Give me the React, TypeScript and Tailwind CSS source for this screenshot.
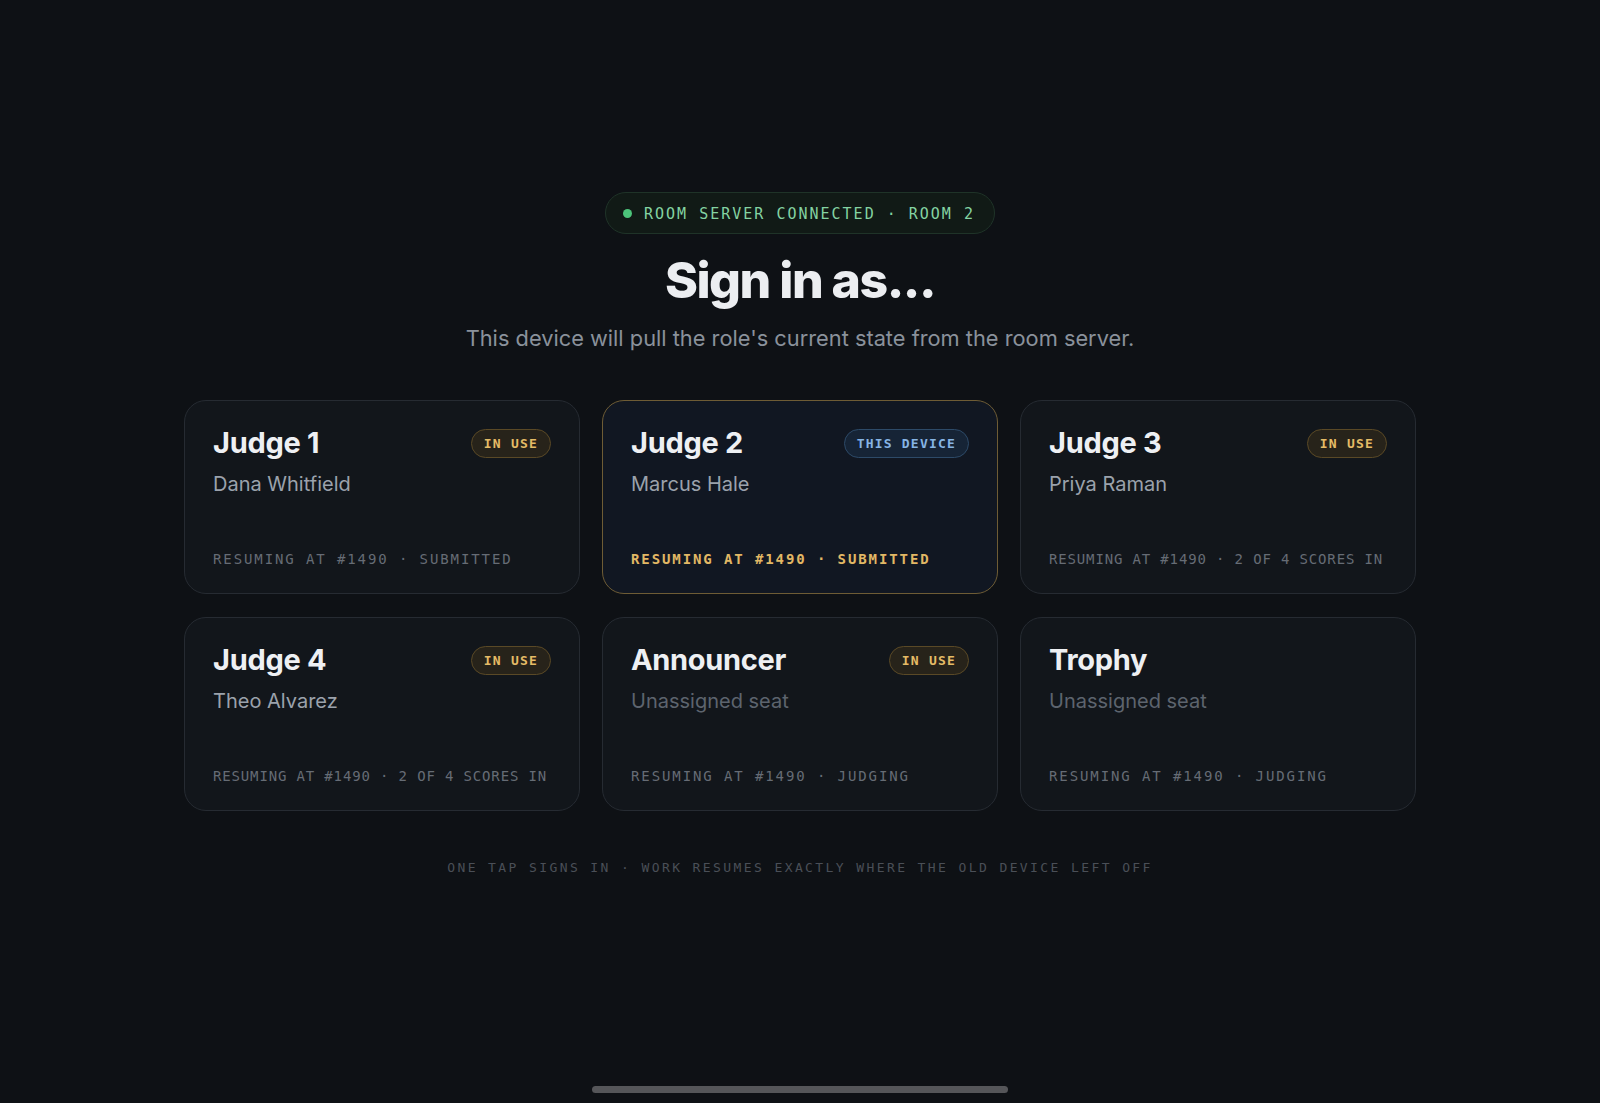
import React from "react";

type Card = {
  title: string;
  name: string;
  assigned: boolean;
  status: string;
  badge?: "inuse" | "device";
  active?: boolean;
  tight?: boolean;
};

const cards: Card[] = [
  { title: "Judge 1", name: "Dana Whitfield", assigned: true, status: "RESUMING AT #1490 · SUBMITTED", badge: "inuse" },
  { title: "Judge 2", name: "Marcus Hale", assigned: true, status: "RESUMING AT #1490 · SUBMITTED", badge: "device", active: true },
  { title: "Judge 3", name: "Priya Raman", assigned: true, status: "RESUMING AT #1490 · 2 OF 4 SCORES IN", badge: "inuse", tight: true },
  { title: "Judge 4", name: "Theo Alvarez", assigned: true, status: "RESUMING AT #1490 · 2 OF 4 SCORES IN", badge: "inuse", tight: true },
  { title: "Announcer", name: "Unassigned seat", assigned: false, status: "RESUMING AT #1490 · JUDGING", badge: "inuse" },
  { title: "Trophy", name: "Unassigned seat", assigned: false, status: "RESUMING AT #1490 · JUDGING" },
];

const mono = { fontFamily: '"DejaVu Sans Mono", "Liberation Mono", monospace' };

function Badge({ kind }: { kind: "inuse" | "device" }) {
  if (kind === "device") {
    return (
      <span
        className="flex h-[29px] items-center rounded-full border border-[#2d4a68] bg-[#162436] px-[12px] text-[13px] font-bold tracking-[1.2px] text-[#86b4e4]"
        style={mono}
      >
        THIS DEVICE
      </span>
    );
  }
  return (
    <span
      className="flex h-[29px] items-center rounded-full border border-[#5a4926] bg-[#27231a] px-[12px] text-[13px] font-bold tracking-[1.2px] text-[#e4bb66]"
      style={mono}
    >
      IN USE
    </span>
  );
}

function RoleCard({ c }: { c: Card }) {
  return (
    <div
      className={
        "flex h-[194px] flex-col rounded-[22px] border px-[28px] pt-[25px] pb-[24px] " +
        (c.active
          ? "border-[#6e5c35] bg-[#111722]"
          : "border-[#262b32] bg-[#12161b]")
      }
    >
      <div className="flex items-start justify-between">
        <div className="text-[29px] leading-[34px] font-bold tracking-[-0.3px] text-[#eef0f3]">{c.title}</div>
        <div className="mt-[3px]">{c.badge && <Badge kind={c.badge} />}</div>
      </div>
      <div
        className={
          "mt-[10px] text-[20px] leading-[28px] " +
          (c.assigned ? "text-[#9ba2ac]" : "text-[#5d646e]")
        }
      >
        {c.name}
      </div>
      <div
        className={
          "mt-auto whitespace-nowrap text-[14px] leading-[20px] " +
          (c.tight ? "tracking-[0.85px] " : "tracking-[1.9px] ") +
          (c.active ? "font-bold text-[#e2b865]" : "text-[#666c75]")
        }
        style={mono}
      >
        {c.status}
      </div>
    </div>
  );
}

export default function App() {
  return (
    <div
      className="relative flex min-h-[1103px] w-full flex-col items-center bg-[#0e1115] pt-[192px]"
      style={{ fontFamily: 'Inter, "Noto Sans", sans-serif' }}
    >
      <div className="flex h-[42px] items-center gap-[12px] rounded-full border border-[#1f3328] bg-[#111a16] pl-[17px] pr-[19px]">
        <span className="h-[9px] w-[9px] rounded-full bg-[#4cc47a]" />
        <span className="pt-[2px] text-[15px] tracking-[2px] text-[#84d3a2]" style={mono}>
          ROOM SERVER CONNECTED · ROOM 2
        </span>
      </div>
      <h1 className="mt-[20px] text-[50px] leading-[52px] font-extrabold tracking-[-1.5px] text-[#eceef1]">
        Sign in as...
      </h1>
      <p className="mt-[17px] text-[21.8px] leading-[30px] text-[#8a919b]">
        This device will pull the role's current state from the room server.
      </p>
      <div className="mt-[47px] grid w-[1232px] grid-cols-3 gap-x-[22px] gap-y-[23px]">
        {cards.map((c) => (
          <RoleCard key={c.title} c={c} />
        ))}
      </div>
      <div className="mt-[47px] text-[13px] leading-[20px] tracking-[2.4px] text-[#4a4f57]" style={mono}>
        ONE TAP SIGNS IN · WORK RESUMES EXACTLY WHERE THE OLD DEVICE LEFT OFF
      </div>
      <div className="absolute bottom-[10px] left-1/2 h-[7px] w-[416px] -translate-x-1/2 rounded-full bg-[#555659]" />
    </div>
  );
}
